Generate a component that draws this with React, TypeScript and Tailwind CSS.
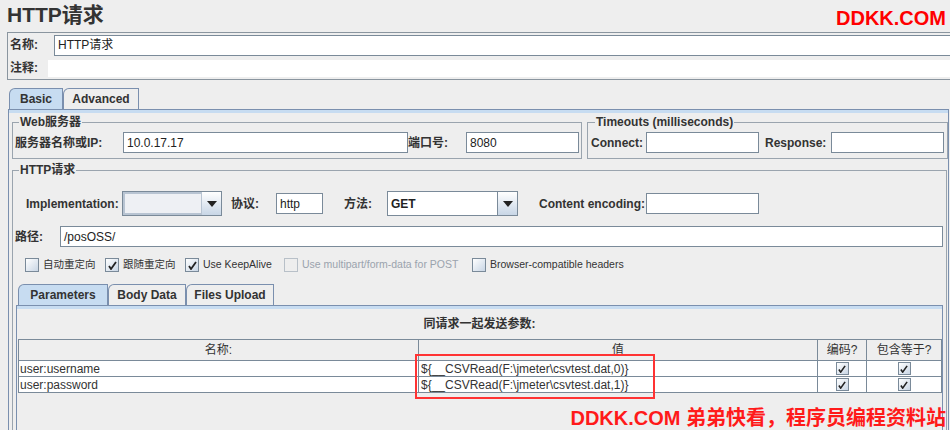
import React from 'react';

const font = { fontFamily: '"Liberation Sans", "Noto Sans CJK SC", sans-serif' };

function Field({ w, className = '', value = '' }: { w?: string; className?: string; value?: string }) {
  return (
    <div
      className={`h-[21px] bg-white border border-[#7a8a99] flex items-center px-[3px] text-[12px] text-[#222] ${w ?? 'flex-1'} ${className}`}
    >
      {value}
    </div>
  );
}

function Combo({ w, value = '', blank = false }: { w: string; value?: string; blank?: boolean }) {
  return (
    <div className={`h-[25px] flex border border-[#7a8a99] ${w}`}>
      <div
        className={`flex-1 flex items-center px-[3px] text-[12px] font-bold text-[#222] border-r border-[#7a8a99] ${blank ? 'bg-[#eef0f4] border-2 border-[#b8c4d2]' : 'bg-white'}`}
      >
        {value}
      </div>
      <div className="w-[19px] bg-gradient-to-b from-white to-[#c8d6e6] flex items-center justify-center">
        <svg width="10" height="6" viewBox="0 0 10 6">
          <path d="M0 0 H10 L5 6 Z" fill="#222" />
        </svg>
      </div>
    </div>
  );
}

function Check({ checked, disabled, label }: { checked?: boolean; disabled?: boolean; label: string }) {
  return (
    <div className="flex items-center gap-[4px] text-[10.5px]">
      <div
        className={`w-[14px] h-[14px] border flex items-center justify-center ${
          disabled ? 'border-[#b8c0c8] bg-[#eeeeee]' : 'border-[#7a8a99] bg-gradient-to-br from-white to-[#c9d6e5]'
        }`}
      >
        {checked && (
          <svg width="9" height="9" viewBox="0 0 9 9">
            <path d="M1 5 L3 8 L8 1" stroke="#222" strokeWidth="1.8" fill="none" />
          </svg>
        )}
      </div>
      <span className={disabled ? 'text-[#9aa3ad]' : 'text-[#333]'}>{label}</span>
    </div>
  );
}

function CellCheck() {
  return (
    <div className="w-[13px] h-[13px] border border-[#7a8a99] bg-gradient-to-br from-white to-[#c9d6e5] flex items-center justify-center">
      <svg width="8" height="8" viewBox="0 0 9 9">
        <path d="M1 5 L3 8 L8 1" stroke="#222" strokeWidth="1.8" fill="none" />
      </svg>
    </div>
  );
}

function Tab({ label, active, w }: { label: string; active?: boolean; w: string }) {
  return (
    <div
      className={`h-[21px] ${w} flex items-center justify-center text-[12px] font-bold text-[#333] border border-b-0 border-[#7a8fae] rounded-tl-[6px] ${
        active ? 'bg-[#c7dcf1]' : 'bg-[#eeeeee]'
      }`}
    >
      {label}
    </div>
  );
}

export default function App() {
  const rows = [
    { name: 'user:username', value: '${__CSVRead(F:\\jmeter\\csvtest.dat,0)}' },
    { name: 'user:password', value: '${__CSVRead(F:\\jmeter\\csvtest.dat,1)}' },
  ];

  return (
    <div className="relative w-[950px] h-[430px] overflow-hidden bg-[#eeeeee] text-[#333]" style={font}>
      {/* header */}
      <div className="h-[32px] flex items-start justify-between pl-[7px] pr-[4px] pt-[3px]">
        <h1 className="text-[21px] font-bold text-[#333] leading-[24px]">HTTP请求</h1>
        <div className="text-[20px] font-bold text-[#ff0000] leading-[24px] mt-[3px]">DDKK.COM</div>
      </div>

      {/* name / comment */}
      <div className="ml-[7px] h-[48px] border border-r-0 border-[#8a959f] flex flex-col">
        <div className="h-[24px] flex items-center">
          <span className="w-[46px] pl-[2px] text-[12px] font-bold">名称:</span>
          <Field value="HTTP请求" className="border-r-0" />
        </div>
        <div className="flex-1 flex items-center">
          <span className="w-[40px] pl-[2px] text-[12px] font-bold">注释:</span>
          <div className="flex-1 h-[17px] bg-white" />
        </div>
      </div>

      {/* tabs */}
      <div className="mt-[8px] ml-[9px] flex">
        <Tab label="Basic" active w="w-[54px]" />
        <Tab label="Advanced" w="w-[76px]" />
      </div>

      <div className="ml-[8px] mr-[1px] h-[330px] border-l border-r border-t border-[#7a8fae]">
        <div className="h-[3px] bg-[#c7dcf1]" />
        <div className="pl-[3px] pr-[1px]">
          {/* web server + timeouts */}
          <div className="flex gap-[5px] mt-[2px]">
            <fieldset className="w-[572px] h-[44px] border border-[#9aa4ae] px-[2px]">
              <legend className="ml-[4px] px-[1px] text-[12px] font-bold leading-[14px]">Web服务器</legend>
              <div className="flex items-center mt-[3px]">
                <span className="w-[108px] text-[12px] font-bold">服务器名称或IP:</span>
                <Field w="w-[285px]" value="10.0.17.17" />
                <span className="w-[58px] text-[12px] font-bold">端口号:</span>
                <Field w="w-[113px]" value="8080" />
              </div>
            </fieldset>
            <fieldset className="flex-1 h-[44px] border border-[#9aa4ae] px-[3px]">
              <legend className="ml-[4px] px-[1px] text-[12px] font-bold leading-[14px]">Timeouts (milliseconds)</legend>
              <div className="flex items-center mt-[3px]">
                <span className="w-[55px] text-[12px] font-bold">Connect:</span>
                <Field w="w-[113px]" />
                <span className="w-[72px] pl-[6px] text-[12px] font-bold">Response:</span>
                <Field w="w-[113px]" />
              </div>
            </fieldset>
          </div>

          {/* http request */}
          <fieldset className="mt-[4px] h-[300px] border border-[#9aa4ae] pl-[2px] pr-[3px]">
            <legend className="ml-[4px] px-[1px] text-[12px] font-bold leading-[14px]">HTTP请求</legend>
            <div className="flex items-center mt-[14px] pl-[11px] h-[25px]">
              <span className="w-[96px] text-[12px] font-bold">Implementation:</span>
              <Combo w="w-[100px]" blank />
              <span className="ml-[9px] w-[45px] text-[12px] font-bold">协议:</span>
              <Field w="w-[47px]" value="http" />
              <span className="ml-[21px] w-[43px] text-[12px] font-bold">方法:</span>
              <Combo w="w-[131px]" value="GET" />
              <span className="ml-[21px] w-[107px] text-[12px] font-bold">Content encoding:</span>
              <Field w="w-[113px]" />
            </div>
            <div className="flex items-center mt-[10px]">
              <span className="w-[45px] text-[12px] font-bold">路径:</span>
              <Field value="/posOSS/" />
            </div>
            <div className="flex items-center mt-[10px] pl-[10px] h-[16px]">
              <div className="w-[80px]"><Check label="自动重定向" /></div>
              <div className="w-[80px]"><Check checked label="跟随重定向" /></div>
              <div className="w-[99px]"><Check checked label="Use KeepAlive" /></div>
              <div className="w-[188px]"><Check disabled label="Use multipart/form-data for POST" /></div>
              <Check label="Browser-compatible headers" />
            </div>

            {/* inner tabs */}
            <div className="mt-[11px] ml-[3px] flex">
              <Tab label="Parameters" active w="w-[90px]" />
              <Tab label="Body Data" w="w-[78px]" />
              <Tab label="Files Upload" w="w-[88px]" />
            </div>
            <div className="ml-[1px] h-[140px] border-l border-r border-t border-[#7a8fae]">
              <div className="h-[3px] bg-[#c7dcf1]" />
              <div className="h-[30px] flex items-center justify-center text-[12px] font-bold">同请求一起发送参数:</div>
              <table className="ml-[1px] w-[923px] border-collapse text-[12px] text-[#333] table-fixed">
                <colgroup>
                  <col className="w-[400px]" />
                  <col className="w-[399px]" />
                  <col className="w-[49px]" />
                  <col className="w-[75px]" />
                </colgroup>
                <thead>
                  <tr className="h-[21px]">
                    <th className="font-normal border border-[#7a8a99]">名称:</th>
                    <th className="font-normal border border-[#7a8a99]">值</th>
                    <th className="font-normal border border-[#7a8a99]">编码?</th>
                    <th className="font-normal border border-[#7a8a99]">包含等于?</th>
                  </tr>
                </thead>
                <tbody>
                  {rows.map((r) => (
                    <tr key={r.name} className="h-[16px] bg-white">
                      <td className="border border-[#7a8a99] px-[1px] leading-[14px]">{r.name}</td>
                      <td className="border border-[#7a8a99] px-[2px] leading-[14px]">{r.value}</td>
                      <td className="border border-[#7a8a99]">
                        <div className="flex justify-center"><CellCheck /></div>
                      </td>
                      <td className="border border-[#7a8a99]">
                        <div className="flex justify-center"><CellCheck /></div>
                      </td>
                    </tr>
                  ))}
                </tbody>
              </table>
            </div>
          </fieldset>
        </div>
      </div>

      {/* annotation overlays */}
      <div className="absolute left-[415px] top-[354px] w-[240px] h-[45px] border-2 border-[#ff3333]" />
      <div className="absolute right-[4px] top-[406px] text-[20px] font-bold text-[#ff1a1a] leading-[24px]">
        DDKK.COM 弟弟快看，程序员编程资料站
      </div>
    </div>
  );
}
